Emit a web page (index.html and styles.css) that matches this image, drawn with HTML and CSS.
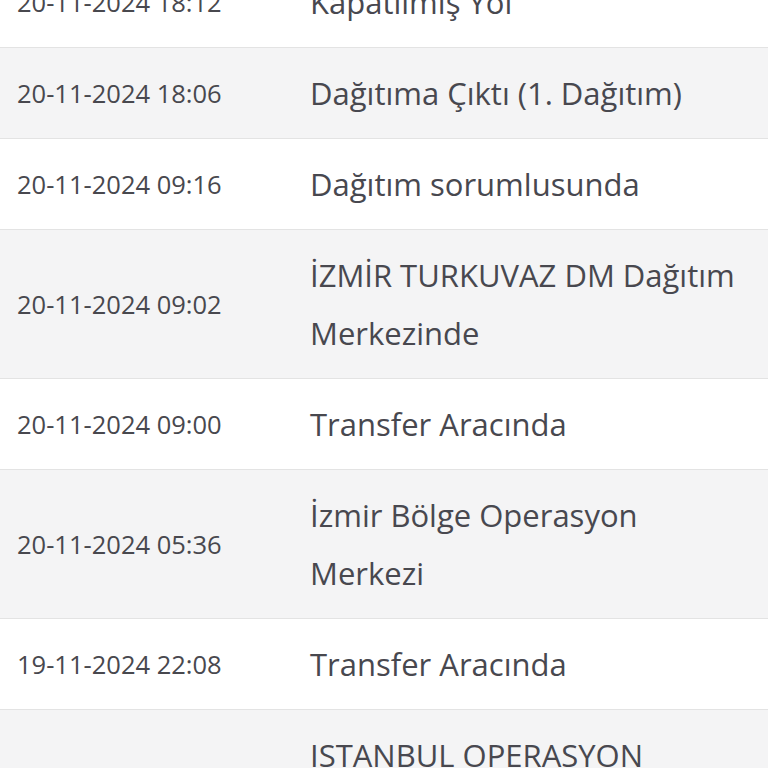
FILE: index.html
```html
<!DOCTYPE html>
<html lang="tr">
<head>
<meta charset="utf-8">
<link rel="stylesheet" href="styles.css">
</head>
<body>
<table class="track">
  <tbody>
    <tr class="row odd"><td class="date">20-11-2024 18:12</td><td class="status">Kapatılmış Yol</td></tr>
    <tr class="row even"><td class="date">20-11-2024 18:06</td><td class="status">Dağıtıma Çıktı (1. Dağıtım)</td></tr>
    <tr class="row odd"><td class="date">20-11-2024 09:16</td><td class="status">Dağıtım sorumlusunda</td></tr>
    <tr class="row even"><td class="date">20-11-2024 09:02</td><td class="status">İZMİR TURKUVAZ DM Dağıtım Merkezinde</td></tr>
    <tr class="row odd"><td class="date">20-11-2024 09:00</td><td class="status">Transfer Aracında</td></tr>
    <tr class="row even"><td class="date">20-11-2024 05:36</td><td class="status">İzmir Bölge Operasyon Merkezi</td></tr>
    <tr class="row odd"><td class="date">19-11-2024 22:08</td><td class="status">Transfer Aracında</td></tr>
    <tr class="row even"><td class="date">19-11-2024 20:41</td><td class="status">ISTANBUL OPERASYON MERKEZİ</td></tr>
  </tbody>
</table>
</body>
</html>
```
FILE: styles.css
```css
html, body {
  margin: 0;
  padding: 0;
  background: #ffffff;
  overflow: hidden;
}
body {
  font-family: "Open Sans", "Noto Sans", sans-serif;
  color: #45454d;
}
.track {
  width: 100%;
  border-collapse: collapse;
  margin-top: -43px;
}
.row td {
  border-bottom: 1px solid #e3e3e3;
  vertical-align: middle;
  padding: 16px 0;
}
.row.even {
  background: #f4f4f5;
}
.date {
  width: 293px;
  padding-left: 17px !important;
  font-size: 25.5px;
  line-height: 58px;
  color: #48484e;
  white-space: nowrap;
}
.status {
  padding-right: 20px !important;
  font-size: 31px;
  line-height: 58px;
  color: #48484f;
}
```
